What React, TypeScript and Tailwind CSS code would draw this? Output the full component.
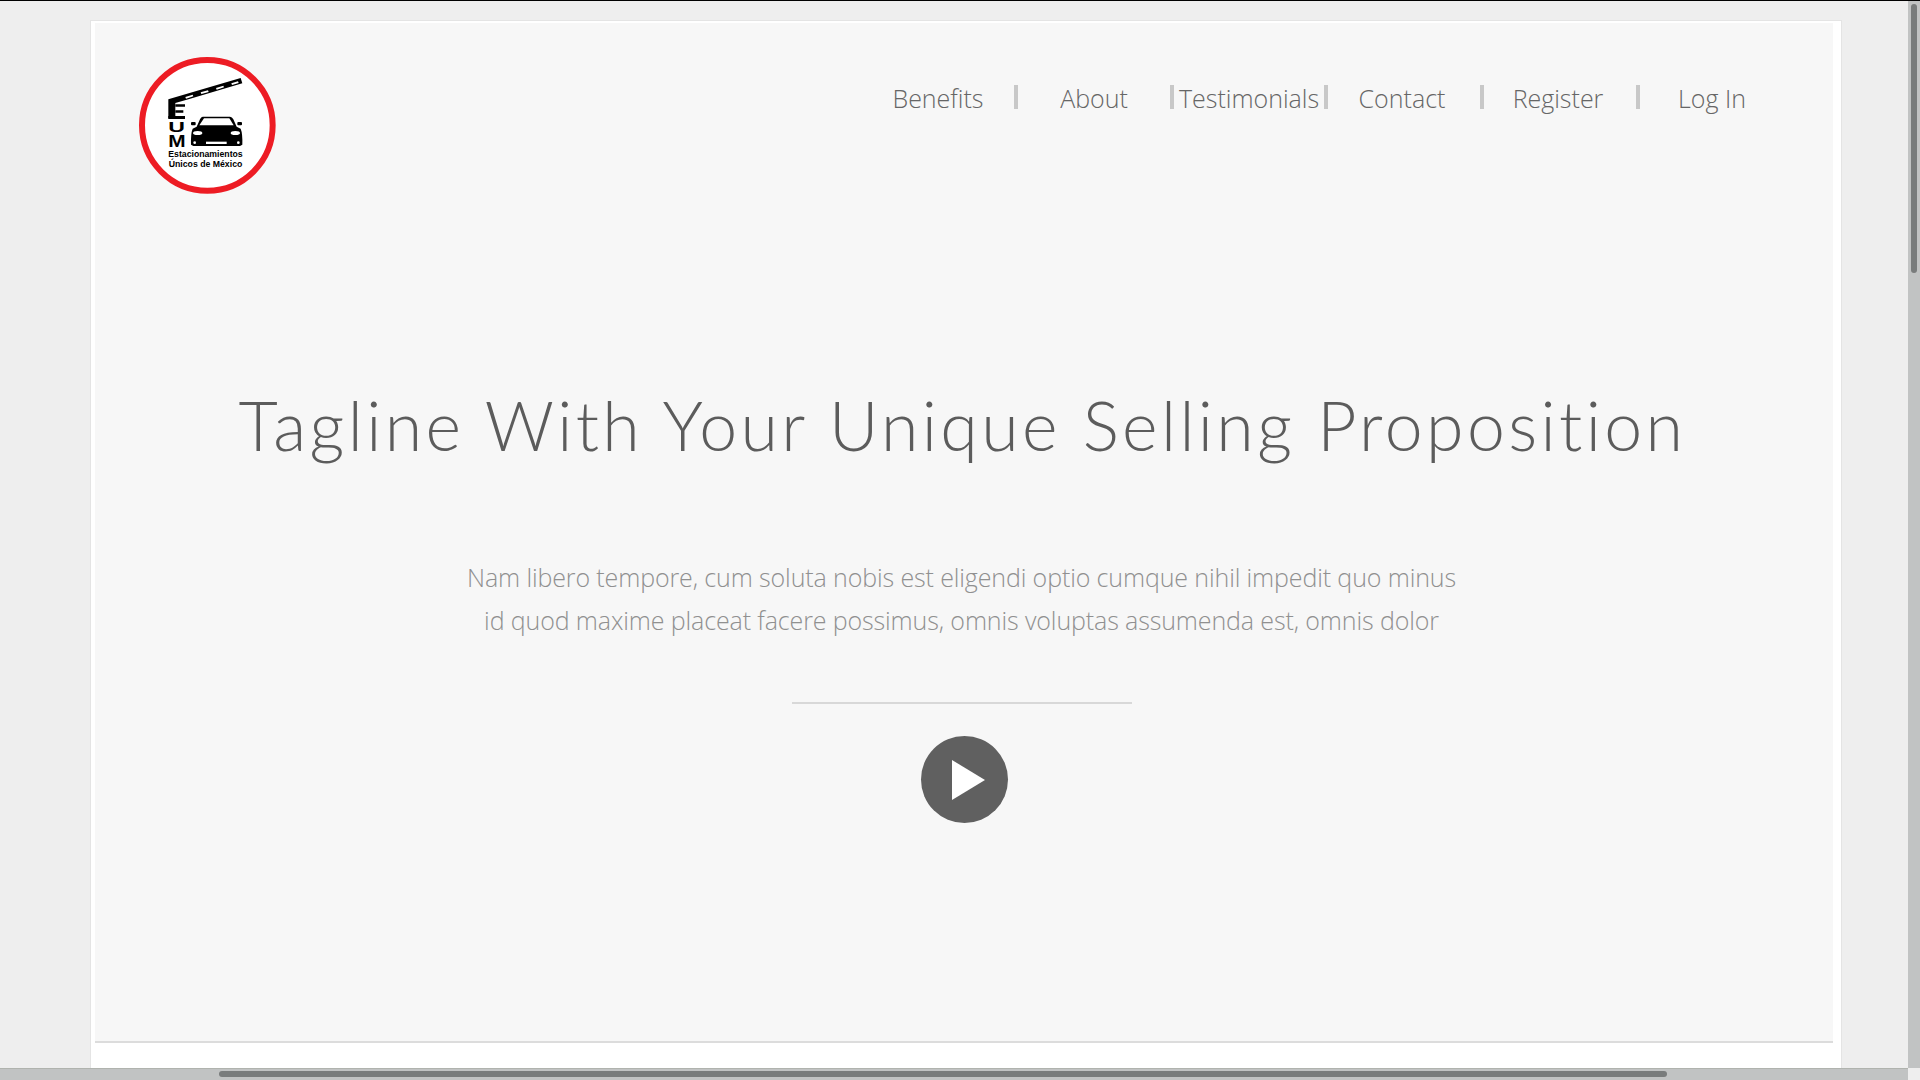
const navItems = [
  { label: "Benefits", cls: "w-[156px] pr-0" },
  { label: "About", cls: "w-[156px] pr-0" },
  { label: "Testimonials", cls: "w-[154px] pl-0" },
  { label: "Contact", cls: "w-[156px] pr-[4px]" },
  { label: "Register", cls: "w-[156px] pr-[4px]" },
  { label: "Log In", cls: "w-[144px]" },
];

function Logo() {
  return (
    <svg viewBox="0 0 450 450" className="h-[150px] w-[150px] shrink-0">
      <circle cx="232" cy="226" r="196" fill="#ffffff" stroke="#ed1c24" strokeWidth="18" />
      {/* barrier arm */}
      <path d="M115 148 L332 84 L337 100 L178 147 L136 159 L136 205 L115 205 Z" fill="#000000" />
      <path d="M166 141 L188 134 L190 139 L168 146 Z M212 127 L234 121 L236 126 L214 132 Z M258 114 L280 107 L282 112 L260 119 Z M304 100 L324 94 L326 99 L306 105 Z" fill="#ffffff" />
      <path d="M136 163 L165 163 L165 170 L136 170 Z M136 181 L160 181 L160 188 L136 188 Z M115 198 L165 198 L165 207 L115 207 Z" fill="#000000" />
      <text x="115" y="247" fontFamily="Liberation Sans" fontWeight="700" fontSize="46" textLength="50" lengthAdjust="spacingAndGlyphs">U</text>
      <text x="115" y="291" fontFamily="Liberation Sans" fontWeight="700" fontSize="50" textLength="52" lengthAdjust="spacingAndGlyphs">M</text>
      {/* car */}
      <path d="M218 200 L300 200 Q306 200 310 208 L320 230 L332 236 Q338 250 337 284 L330 288 L190 288 L183 284 Q182 250 188 236 L200 230 L210 208 Q213 200 218 200 Z" fill="#000000" />
      <path d="M222 205 L298 205 L311 226 L208 226 Z" fill="#ffffff" />
      <rect x="183" y="216" width="14" height="10" rx="3" fill="#000000" />
      <rect x="322" y="216" width="14" height="10" rx="3" fill="#000000" />
      <ellipse cx="203" cy="249" rx="14" ry="6" fill="#ffffff" />
      <ellipse cx="316" cy="249" rx="14" ry="6" fill="#ffffff" />
      <rect x="228" y="275" width="62" height="7" fill="#ffffff" />
      <circle cx="194" cy="278" r="4" fill="#ffffff" />
      <circle cx="325" cy="278" r="4" fill="#ffffff" />
      <text x="115" y="322" fontFamily="Liberation Sans" fontWeight="700" fontSize="25" textLength="223" lengthAdjust="spacingAndGlyphs">Estacionamientos</text>
      <text x="116" y="351" fontFamily="Liberation Sans" fontWeight="700" fontSize="25" textLength="221" lengthAdjust="spacingAndGlyphs">Únicos de México</text>
    </svg>
  );
}

export default function App() {
  return (
    <div className="flex h-screen flex-col overflow-hidden border-t border-black bg-[#eeeeee]">
      <div className="flex min-h-0 flex-1">
        <div className="min-w-0 flex-1 overflow-hidden pl-[90px] pt-[19px]">
          <div className="w-[1752px] border border-[#e4e4e4] bg-white pb-[30px] pl-[4px] pr-[8px] pt-[2px]">
            <div className="h-[1020px] border-b-2 border-[#dcdcdc] bg-[#f7f7f7]">
              <header className="flex items-start pt-[6px]">
                <div className="pl-[35px] pt-[21px]">
                  <Logo />
                </div>
                <nav className="ml-[582px] mt-[56px] flex">
                  {navItems.map((item, i) => (
                    <a
                      key={item.label}
                      className={`flex h-[24px] items-center justify-center pt-[3px] font-['Open_Sans'] text-[25px] font-light text-[#666666] ${item.cls} ${
                        i < navItems.length - 1 ? "border-r-[4px] border-[#c8c8c8]" : ""
                      }`}
                    >
                      {item.label}
                    </a>
                  ))}
                </nav>
              </header>

              <main className="flex flex-col items-center pr-[3px]">
                <h1 className="mt-[182px] font-['Lato'] text-[68px] leading-[86px] font-light tracking-[3.4px] text-[#5c5c5c]">
                  Tagline With Your Unique Selling Proposition
                </h1>
                <p className="mr-[2px] mt-[88px] text-center font-['Open_Sans'] text-[25px] leading-[43px] font-light tracking-[-0.12px] text-[#909090]">
                  Nam libero tempore, cum soluta nobis est eligendi optio cumque nihil impedit quo minus
                  <br />
                  id quod maxime placeat facere possimus, omnis voluptas assumenda est, omnis dolor
                </p>
                <div className="mr-[2px] mt-[60px] h-[2px] w-[340px] bg-[#d8d8d8]" />
                <button className="ml-[3px] mt-[32px] flex h-[87px] w-[87px] items-center justify-center rounded-full bg-[#606060]">
                  <svg viewBox="0 0 33 40" className="ml-[9px] h-[40px] w-[33px]">
                    <path d="M0 0 L33 20 L0 40 Z" fill="#ffffff" />
                  </svg>
                </button>
              </main>
            </div>
          </div>
        </div>
        {/* vertical scrollbar */}
        <div className="w-[12px] shrink-0 bg-[#c1c3c3] px-[3px] pt-[3px]">
          <div className="h-[269px] rounded-[3px] bg-[#797c7c]" />
        </div>
      </div>
      {/* horizontal scrollbar */}
      <div className="flex h-[12px] shrink-0">
        <div className="flex-1 border-t border-[#b0b3ae] bg-[#c1c3c3] pl-[219px] pt-[2px]">
          <div className="h-[6px] w-[1448px] rounded-[3px] bg-[#797c7c]" />
        </div>
        <div className="w-[12px] bg-[#eeeeee]" />
      </div>
    </div>
  );
}
